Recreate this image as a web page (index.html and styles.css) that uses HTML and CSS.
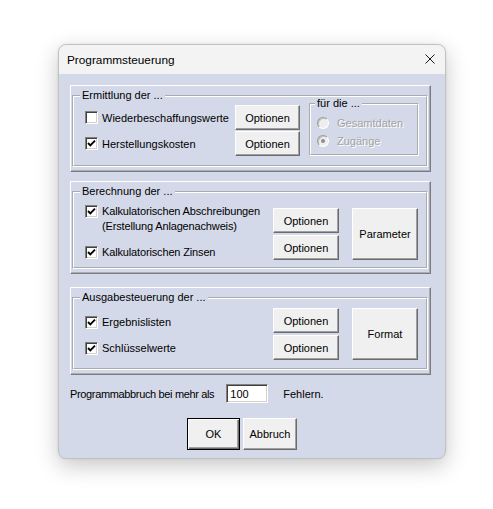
FILE: index.html
```html
<!DOCTYPE html>
<html lang="de">
<head>
<meta charset="utf-8">
<title>Programmsteuerung</title>
<link rel="stylesheet" href="styles.css">
</head>
<body>
<div class="window">
  <div class="titlebar">
    <span class="title">Programmsteuerung</span>
    <svg class="close" width="10" height="10" viewBox="0 0 10 10"><path d="M0.5 0.5 L9.5 9.5 M9.5 0.5 L0.5 9.5" stroke="#1a1a1a" stroke-width="1" fill="none"/></svg>
  </div>
  <div class="client">
    <div class="panel">
      <fieldset class="group">
        <legend>Ermittlung der ...</legend>
        <div class="group-body body-1">
          <div class="checks checks-1">
            <div class="check row-25"><span class="box"></span><span class="lbl">Wiederbeschaffungswerte</span></div>
            <div class="check row-25"><span class="box"><svg width="9" height="9" viewBox="0 0 9 9"><path d="M1 4 L3.3 6.3 L8 1.6" stroke="#000" stroke-width="1.9" fill="none"/></svg></span><span class="lbl">Herstellungskosten</span></div>
          </div>
          <div class="stack stack-1">
            <button class="btn">Optionen</button>
            <button class="btn">Optionen</button>
          </div>
          <fieldset class="subgroup">
            <legend>für die ...</legend>
            <div class="sub-body">
              <div class="radio"><span class="rbox"></span><span class="dis">Gesamtdaten</span></div>
              <div class="radio"><span class="rbox on"></span><span class="dis">Zugänge</span></div>
            </div>
          </fieldset>
        </div>
      </fieldset>
    </div>

    <div class="panel panel-2">
      <fieldset class="group">
        <legend>Berechnung der ...</legend>
        <div class="group-body body-2">
          <div class="checks checks-2">
            <div class="check multi"><span class="box"><svg width="9" height="9" viewBox="0 0 9 9"><path d="M1 4 L3.3 6.3 L8 1.6" stroke="#000" stroke-width="1.9" fill="none"/></svg></span><span class="lbl tight">Kalkulatorischen Abschreibungen<br>(Erstellung Anlagenachweis)</span></div>
            <div class="check multi second"><span class="box"><svg width="9" height="9" viewBox="0 0 9 9"><path d="M1 4 L3.3 6.3 L8 1.6" stroke="#000" stroke-width="1.9" fill="none"/></svg></span><span class="lbl tight">Kalkulatorischen Zinsen</span></div>
          </div>
          <div class="stack stack-2">
            <button class="btn">Optionen</button>
            <button class="btn">Optionen</button>
          </div>
          <button class="btn big">Parameter</button>
        </div>
      </fieldset>
    </div>

    <div class="panel panel-3">
      <fieldset class="group">
        <legend>Ausgabesteuerung der ...</legend>
        <div class="group-body body-3">
          <div class="checks checks-3">
            <div class="check row-27"><span class="box"><svg width="9" height="9" viewBox="0 0 9 9"><path d="M1 4 L3.3 6.3 L8 1.6" stroke="#000" stroke-width="1.9" fill="none"/></svg></span><span class="lbl">Ergebnislisten</span></div>
            <div class="check row-27"><span class="box"><svg width="9" height="9" viewBox="0 0 9 9"><path d="M1 4 L3.3 6.3 L8 1.6" stroke="#000" stroke-width="1.9" fill="none"/></svg></span><span class="lbl">Schlüsselwerte</span></div>
          </div>
          <div class="stack stack-2">
            <button class="btn">Optionen</button>
            <button class="btn">Optionen</button>
          </div>
          <button class="btn big">Format</button>
        </div>
      </fieldset>
    </div>

    <div class="limit-row">
      <span class="lbl limit-lbl">Programmabbruch bei mehr als</span>
      <span class="field">100</span>
      <span class="lbl">Fehlern.</span>
    </div>

    <div class="actions">
      <button class="btn action default">OK</button>
      <button class="btn action">Abbruch</button>
    </div>
  </div>
</div>
</body>
</html>
```

FILE: styles.css
```css
* { box-sizing: border-box; }

html, body {
  margin: 0;
  padding: 0;
  background: #ffffff;
  width: 493px;
  height: 509px;
  overflow: hidden;
}

body {
  font-family: "Liberation Sans", Arial, sans-serif;
  font-size: 11px;
  color: #000;
}

.window {
  margin: 44px 0 0 58px;
  width: 388px;
  border: 1px solid #c2c2c2;
  border-radius: 8px;
  overflow: hidden;
  background: #d4d9e9;
  box-shadow: 0 7px 22px rgba(0, 0, 0, 0.22), 0 0 3px rgba(0, 0, 0, 0.08);
}

.titlebar {
  height: 29px;
  background: #f3f3f3;
  display: flex;
  align-items: center;
  justify-content: space-between;
  padding: 0 10px 0 8px;
}

.title {
  font-size: 11.8px;
  color: #000;
}

.close { display: block; margin-top: -2px; }

.client {
  padding: 11px 14px 8px 11px;
}

.panel {
  width: 361px;
  border: 1px solid;
  border-color: #ffffff #7c7c7c #7c7c7c #ffffff;
  box-shadow: inset -1px -1px 0 #a9acb6;
  padding: 3px 2px 4px 1px;
}

.panel-2 { margin-top: 9px; }
.panel-3 { margin-top: 13px; }

.group {
  margin: 0;
  padding: 0;
  min-width: 0;
  border: 2px groove #ffffff;
}

.group > legend,
.subgroup > legend {
  font-size: 11px;
  line-height: 13px;
  padding: 0 2px;
  margin-left: 6px;
}

.group-body { display: flex; align-items: flex-start; }

.body-1 { padding: 3px 7px 9px 11px; }
.body-2 { padding: 10px 8px 7px 11px; }
.body-3 { padding: 4px 8px 7px 11px; }

.checks { display: flex; flex-direction: column; }
.checks-1 { width: 150px; gap: 1px; }
.checks-2 { width: 188px; margin-top: -4px; }
.checks-3 { width: 188px; margin-top: 1px; }

.check { display: flex; align-items: center; }
.row-25 { height: 25px; }
.row-27 { height: 26px; }
.check.multi { align-items: flex-start; line-height: 15px; }
.check.multi .box { margin-top: 1px; }
.check.second { margin-top: 11px; }

.tight { letter-spacing: -0.15px; }

.box {
  width: 13px;
  height: 13px;
  flex: none;
  background: #fff;
  border: 1px solid;
  border-color: #808080 #ffffff #ffffff #808080;
  box-shadow: inset 1px 1px 0 #404040, inset -1px -1px 0 #d4d0c8;
  display: flex;
  align-items: center;
  justify-content: center;
  margin-right: 4px;
}

.box svg { display: block; }

.stack { display: flex; flex-direction: column; }
.stack-1 { width: 65px; gap: 1px; }
.stack-1 .btn { height: 25px; }
.stack-2 { width: 66px; gap: 2px; }
.stack-2 .btn { height: 25px; }

.btn {
  font-family: "Liberation Sans", Arial, sans-serif;
  font-size: 11px;
  color: #000;
  margin: 0;
  padding: 0;
  width: 100%;
  background: #f0f0f0;
  border: 1px solid;
  border-color: #ffffff #6b6b6b #6b6b6b #ffffff;
  box-shadow: inset -1px -1px 0 #a0a0a0;
  border-radius: 0;
}

.big {
  width: 66px;
  height: 52px;
  margin-left: 13px;
  flex: none;
}

.subgroup {
  margin: -8px 0 0 9px;
  padding: 0;
  width: 110px;
  min-width: 0;
  border: 2px groove #ffffff;
  flex: none;
}

.subgroup > legend { margin-left: 4px; }

.sub-body { padding: 4px 0 4px 6px; }

.radio {
  height: 18px;
  display: flex;
  align-items: center;
}

.rbox {
  width: 12px;
  height: 12px;
  border-radius: 50%;
  background: #eeeeee;
  border: 1px solid;
  border-color: #9a9a9a #ffffff #ffffff #9a9a9a;
  box-shadow: inset 1px 1px 0 #c4c4c4;
  margin-right: 8px;
  flex: none;
  display: flex;
  align-items: center;
  justify-content: center;
}

.rbox.on::after {
  content: "";
  width: 4px;
  height: 4px;
  border-radius: 50%;
  background: #8c8c8c;
}

.dis {
  color: #a3a3a3;
  text-shadow: 1px 1px 0 #ffffff;
}

.limit-row {
  margin-top: 9px;
  display: flex;
  align-items: center;
  height: 19px;
}

.limit-lbl { letter-spacing: -0.35px; }

.field {
  margin-left: 12px;
  width: 42px;
  height: 19px;
  background: #fff;
  border: 1px solid;
  border-color: #808080 #ffffff #ffffff #808080;
  box-shadow: inset 1px 1px 0 #404040, inset -1px -1px 0 #d4d0c8;
  padding: 2px 0 0 3px;
  line-height: 14px;
}

.field + .lbl { margin-left: 15px; }

.actions {
  margin-top: 15px;
  padding-left: 117px;
  display: flex;
  gap: 3px;
}

.action {
  width: 53px;
  height: 32px;
}

.action + .action { width: 54px; }

.default {
  border-color: #000;
  box-shadow: inset 1px 1px 0 #ffffff, inset -1px -1px 0 #6b6b6b, inset -2px -2px 0 #a0a0a0;
}
```
